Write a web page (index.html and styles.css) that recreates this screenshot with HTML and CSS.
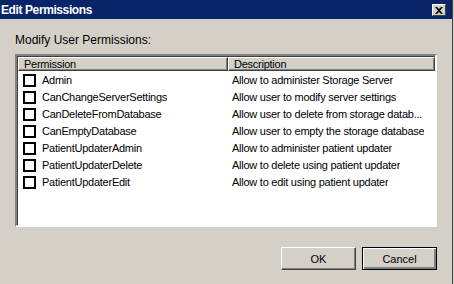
FILE: index.html
```html
<!DOCTYPE html>
<html lang="en">
<head>
    <meta charset="UTF-8">
    <title>Edit Permissions</title>
    <link rel="stylesheet" href="styles.css">
</head>
<body>

<div class="window">
    <div class="titlebar">
        <span class="title">Edit Permissions</span>
        <button class="close-btn" title="Close">
            <svg width="8" height="7" viewBox="0 0 8 7"><path d="M0 0h2l2 2 2-2h2L5 3.5 8 7H6L4 5 2 7H0l3-3.5z" fill="#000"/></svg>
        </button>
    </div>
    <div class="content">
        <div class="label">Modify User Permissions:</div>
        <div class="listview">
            <div class="header">
                <div class="col col-perm">Permission</div>
                <div class="col col-desc">Description</div>
            </div>
            <div class="rows" id="rows"></div>
        </div>
        <div class="buttons">
            <button class="btn">OK</button>
            <button class="btn default">Cancel</button>
        </div>
    </div>
</div>

<script>
    const permissions = [
        { name: "Admin", desc: "Allow to administer Storage Server" },
        { name: "CanChangeServerSettings", desc: "Allow user to modify server settings" },
        { name: "CanDeleteFromDatabase", desc: "Allow user to delete from storage datab..." },
        { name: "CanEmptyDatabase", desc: "Allow user to empty the storage database" },
        { name: "PatientUpdaterAdmin", desc: "Allow to administer patient updater" },
        { name: "PatientUpdaterDelete", desc: "Allow to delete using patient updater" },
        { name: "PatientUpdaterEdit", desc: "Allow to edit using patient updater" }
    ];

    const rows = document.getElementById('rows');
    permissions.forEach(p => {
        const row = document.createElement('div');
        row.className = 'row';
        row.innerHTML = `<div class="cell cell-perm"><span class="check"></span>${p.name}</div><div class="cell cell-desc">${p.desc}</div>`;
        rows.appendChild(row);
    });
</script>

</body>
</html>
```

FILE: styles.css
```css
body {
    margin: 0;
    background-color: #d4d0c8;
    font-family: "Liberation Sans", Arial, sans-serif;
    font-size: 11px;
    color: #000;
}
.window {
    width: 452px;
    height: 284px;
    border-right: 1px solid #404040;
    background-color: #d4d0c8;
}
.titlebar {
    height: 19px;
    background-color: #0a246a;
    display: flex;
    align-items: center;
    justify-content: space-between;
    padding: 0 6px 0 1px;
}
.title {
    color: white;
    font-weight: bold;
    font-size: 12px;
    letter-spacing: -0.4px;
}
.close-btn {
    width: 14px;
    height: 12px;
    margin-top: 1px;
    padding: 0;
    background-color: #d4d0c8;
    border: 1px solid;
    border-color: #fff #404040 #404040 #fff;
    display: flex;
    align-items: center;
    justify-content: center;
}
.content {
    padding: 15px 15px 0 15px;
}
.label {
    height: 13px;
    line-height: 13px;
    font-size: 12px;
    margin-bottom: 7px;
}
.listview {
    width: 418px;
    height: 169px;
    background-color: white;
    border: 2px solid;
    border-color: #808080 #fff #fff #808080;
    box-shadow: inset 1px 1px 0 #404040;
    letter-spacing: -0.25px;
}
.header {
    display: flex;
    height: 14px;
    margin: 1px 0 0 1px;
}
.col {
    background-color: #d4d0c8;
    border-top: 1px solid #fff;
    border-left: 1px solid #fff;
    border-right: 1px solid #404040;
    border-bottom: 1px solid #404040;
    box-shadow: inset -1px -1px 0 #808080;
    line-height: 12px;
    padding-left: 5px;
    box-sizing: border-box;
    height: 14px;
}
.col-perm {
    width: 210px;
}
.col-desc {
    width: 207px;
}
.rows {
    padding-top: 1px;
}
.row {
    display: flex;
    height: 17px;
    line-height: 17px;
}
.cell {
    white-space: nowrap;
    overflow: hidden;
}
.cell-perm {
    width: 210px;
    padding-left: 6px;
    box-sizing: border-box;
    display: flex;
    align-items: center;
}
.cell-desc {
    padding-left: 5px;
}
.check {
    width: 9px;
    height: 9px;
    border: 2px solid #000;
    background-color: white;
    margin-right: 6px;
}
.buttons {
    display: flex;
    justify-content: flex-end;
    gap: 6px;
    margin-top: 20px;
    width: 422px;
}
.btn {
    width: 75px;
    height: 23px;
    padding: 0;
    font-family: "Liberation Sans", Arial, sans-serif;
    font-size: 11px;
    color: #000;
    background-color: #d4d0c8;
    border: 1px solid;
    border-color: #fff #404040 #404040 #fff;
    box-shadow: inset -1px -1px 0 #808080;
}
.btn.default {
    border: 1px solid #000;
    box-shadow: inset 1px 1px 0 #fff, inset -2px -2px 0 #808080, inset -1px -1px 0 #404040;
}
```
